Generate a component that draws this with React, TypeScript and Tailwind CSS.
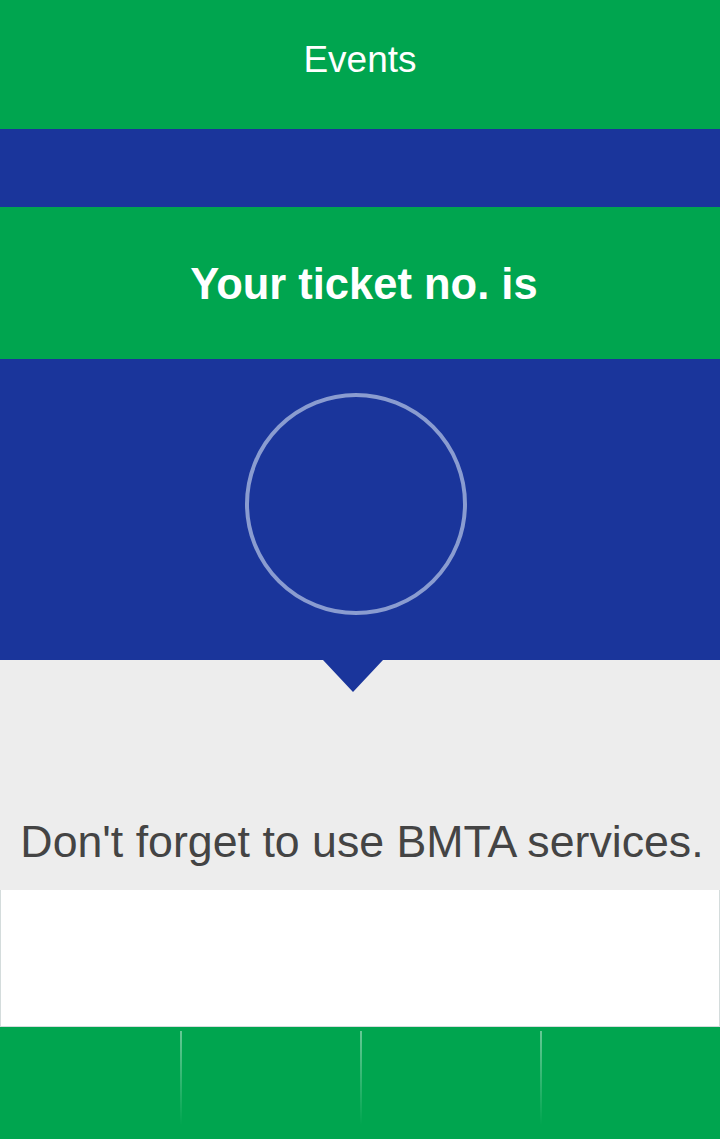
import React from 'react';

const FooterTab: React.FC<{ divider?: boolean }> = ({ divider }) => (
  <div className="relative flex-1 h-full">
    {divider && (
      <div className="absolute left-0 top-[4px] bottom-[14px] w-[2px] bg-gradient-to-b from-white/40 to-white/0" />
    )}
  </div>
);

const App: React.FC = () => (
  <div className="w-[720px] h-[1139px] flex flex-col overflow-hidden font-['Liberation_Sans',Arial,sans-serif]">
    <header className="h-[129px] bg-[#00a54f] flex items-start justify-center pt-[38px]">
      <h1 className="text-white text-[37px] leading-[44px]">Events</h1>
    </header>

    <div className="h-[78px] bg-[#1a359b]" />

    <div className="h-[152px] bg-[#00a54f] flex items-center justify-center">
      <h2 className="text-white font-bold text-[43.5px] leading-none pt-[4px] ml-[8px]">Your ticket no. is</h2>
    </div>

    <div className="relative h-[301px] bg-[#1a359b] flex justify-center">
      <div className="mt-[34px] ml-[-8px] w-[222px] h-[222px] rounded-full border-[4px] border-[#8a9cd0]" />
      <div className="absolute left-[323px] top-full w-0 h-0 border-l-[30px] border-r-[30px] border-t-[32px] border-l-transparent border-r-transparent border-t-[#1a359b] z-10" />
    </div>

    <div className="h-[230px] bg-[#ededed] flex items-end justify-center pb-[25px]">
      <p className="text-[#444444] text-[44.7px] leading-none ml-[4px]">Don't forget to use BMTA services.</p>
    </div>

    <div className="h-[137px] bg-white border-x border-b border-[#d4dcdc]" />

    <nav className="flex-1 bg-[#00a54f] flex">
      <FooterTab />
      <FooterTab divider />
      <FooterTab divider />
      <FooterTab divider />
    </nav>
  </div>
);

export default App;
